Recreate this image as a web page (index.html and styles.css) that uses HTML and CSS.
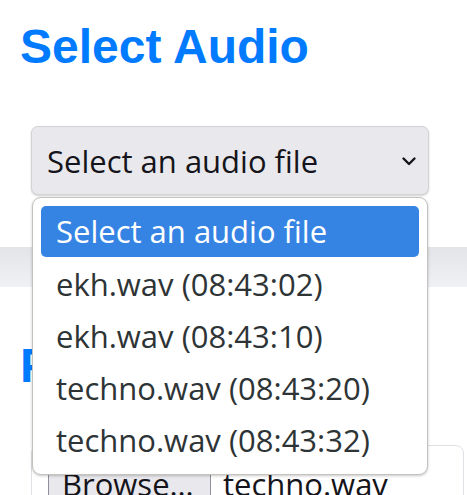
FILE: index.html
```html
<!DOCTYPE html>
<html lang="en">
<head>
<meta charset="utf-8">
<title>Select Audio</title>
<link rel="stylesheet" href="styles.css">
</head>
<body>
<main class="page">
  <h1 class="title">Select Audio</h1>
  <div class="select-box">
    <span class="select-text">Select an audio file</span>
    <svg class="chevron" width="16" height="11" viewBox="0 0 16 11"><polyline points="2.5,2.5 8,8 13.5,2.5" fill="none" stroke="#15141a" stroke-width="2.4" stroke-linecap="round" stroke-linejoin="round"/></svg>
  </div>
  <div class="band"></div>
  <h2 class="title">Play Audio</h2>
  <div class="card">
    <div class="file-input">
      <span class="browse">Browse…</span>
      <span class="file-name">techno.wav</span>
    </div>
  </div>
  <ul class="popup">
    <li class="option selected">Select an audio file</li>
    <li class="option">ekh.wav (08:43:02)</li>
    <li class="option">ekh.wav (08:43:10)</li>
    <li class="option">techno.wav (08:43:20)</li>
    <li class="option">techno.wav (08:43:32)</li>
  </ul>
</main>
</body>
</html>
```

FILE: styles.css
```css
html, body {
  margin: 0;
  padding: 0;
  background: #ffffff;
  overflow: hidden;
}
body {
  width: 467px;
  height: 495px;
  font-family: "Open Sans", "Noto Sans", sans-serif;
}
.page {
  position: relative;
  display: flex;
  flex-direction: column;
  gap: 52px;
  padding-top: 20px;
}
.title {
  margin: 0 0 0 20px;
  font-family: "Liberation Sans", Arial, sans-serif;
  font-weight: 700;
  font-size: 48px;
  line-height: 54px;
  color: #007bff;
}
.select-box {
  box-sizing: border-box;
  margin-left: 31px;
  width: 398px;
  height: 69px;
  background: #e9e9ed;
  border: 1px solid #d3d3d7;
  border-radius: 7px;
  box-shadow: 0 1px 2px rgba(0, 0, 0, 0.18);
  display: flex;
  align-items: center;
  justify-content: space-between;
  padding: 0 11px 0 15px;
}
.select-text {
  font-size: 31px;
  color: #15141a;
  line-height: 42px;
}
.chevron {
  display: block;
  margin-top: 2px;
}
.band {
  height: 40px;
  background: linear-gradient(#e3e4e7, #f0f1f4);
}
.card {
  box-sizing: border-box;
  margin-left: 31px;
  width: 433px;
  height: 120px;
  border: 1px solid #dee2e6;
  border-radius: 8px;
  padding: 13px 16px;
}
.file-input {
  display: flex;
  align-items: center;
  gap: 12px;
  font-size: 31px;
  line-height: 42px;
  color: #15141a;
}
.browse {
  box-sizing: border-box;
  width: 163px;
  padding: 3px 13px;
  background: #e9e9ed;
  border: 1px solid #8f8f9d;
  border-radius: 4px;
  white-space: nowrap;
  overflow: hidden;
}
.file-name {
  white-space: nowrap;
}
.popup {
  position: absolute;
  top: 197px;
  left: 32px;
  box-sizing: border-box;
  width: 396px;
  margin: 0;
  padding: 8px;
  list-style: none;
  background: #ffffff;
  border: 1px solid #c6c2bd;
  border-radius: 9px;
  box-shadow: 0 1px 3px rgba(0, 0, 0, 0.22);
}
.option {
  height: 52px;
  line-height: 52px;
  padding: 0 15px;
  font-size: 31px;
  color: #2e3436;
  border-radius: 5px;
  white-space: nowrap;
}
.option.selected {
  height: 51px;
  margin-bottom: 1px;
  line-height: 51px;
  background: #3584e4;
  color: #ffffff;
}
```
